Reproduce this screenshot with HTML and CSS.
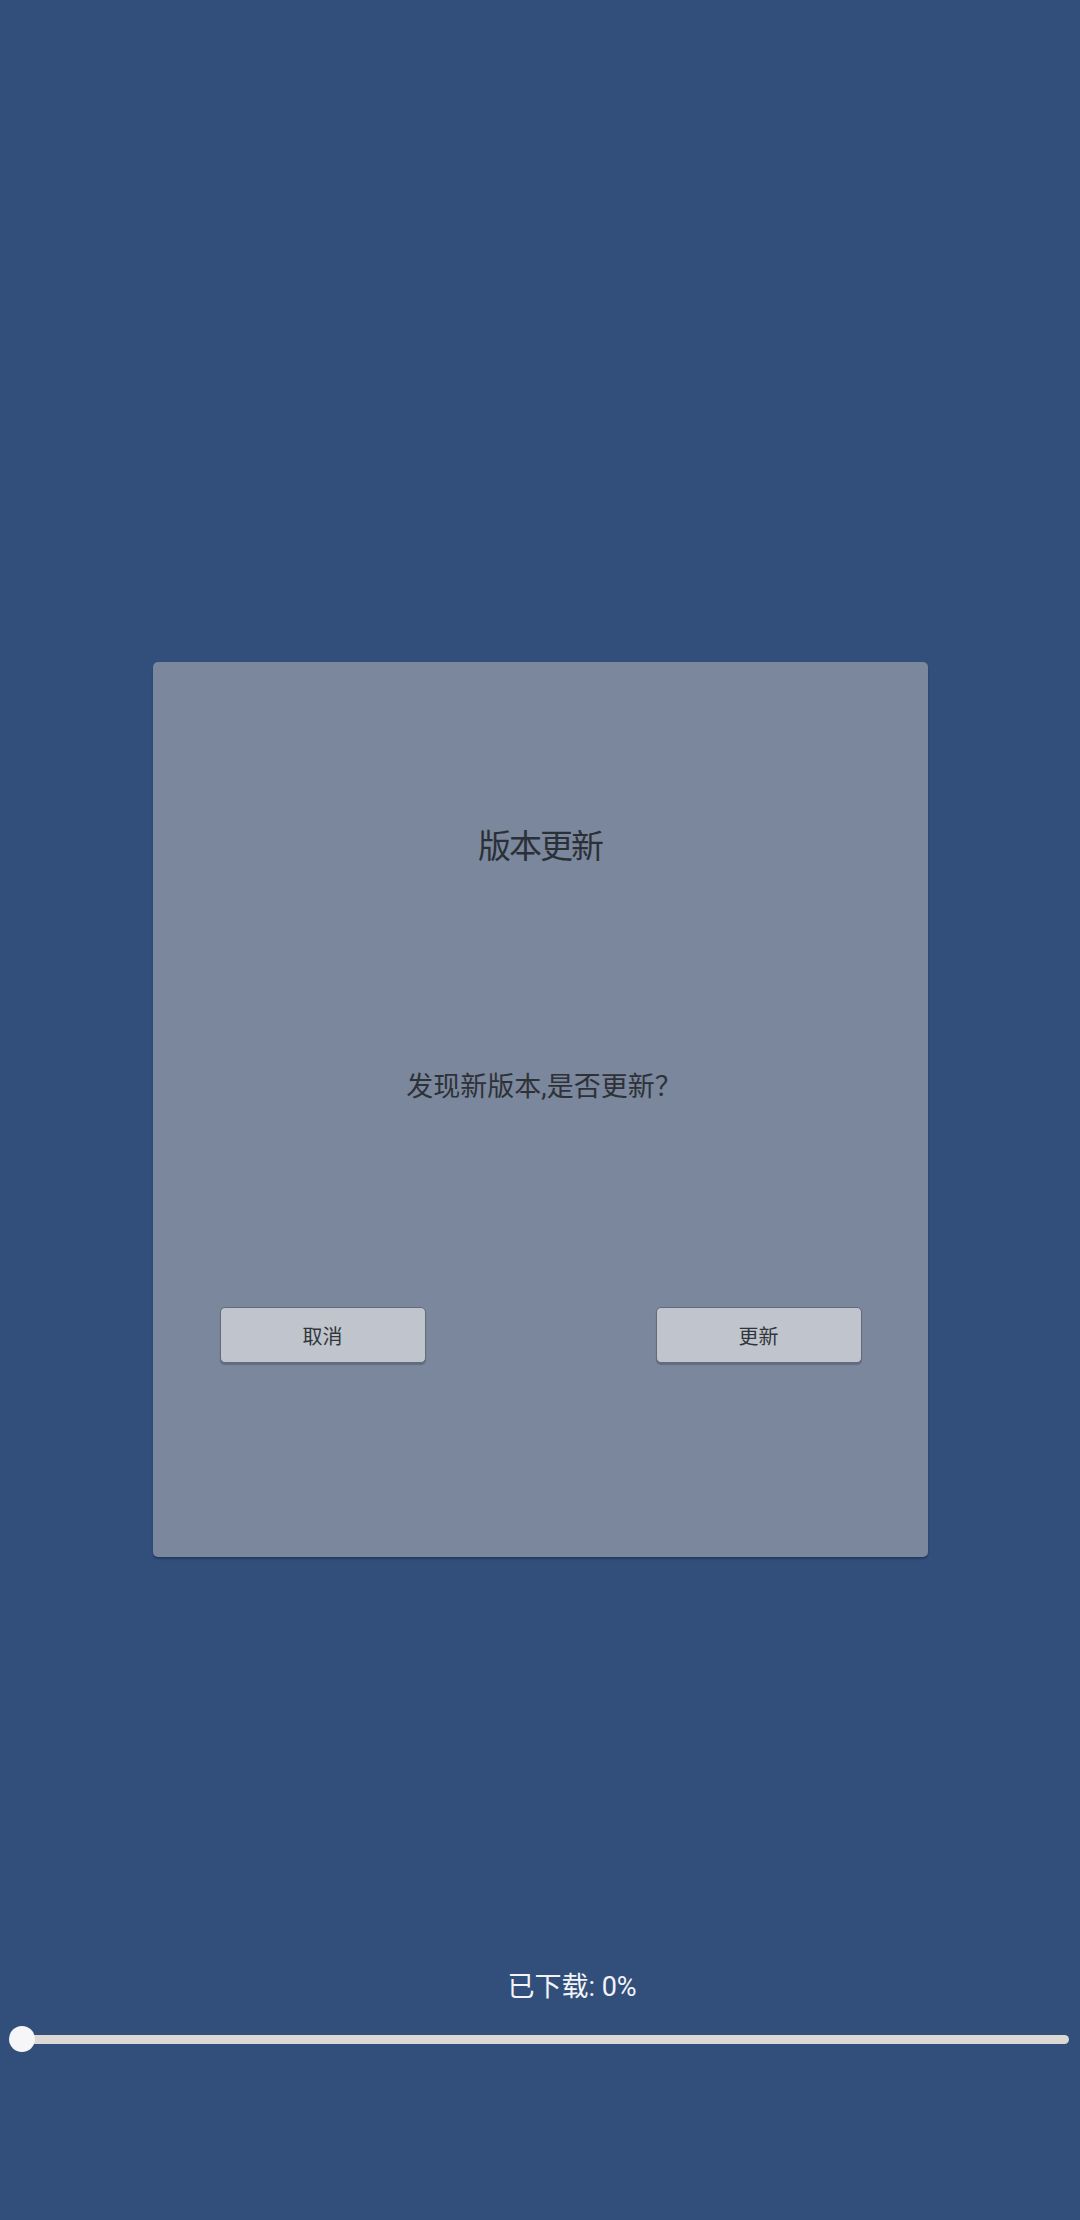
FILE: index.html
```html
<!DOCTYPE html>
<html lang="zh-CN">
<head>
<meta charset="utf-8">
<title>版本更新</title>
<link rel="stylesheet" href="styles.css">
</head>
<body>
<div class="screen">
  <div class="dialog">
    <div class="title">版本更新</div>
    <div class="message">发现新版本,是否更新？</div>
    <div class="actions">
      <div class="btn">取消</div>
      <div class="btn">更新</div>
    </div>
  </div>
  <div class="progress-label">已下载: 0%</div>
  <div class="slider">
    <div class="track"></div>
    <div class="handle"></div>
  </div>
</div>
</body>
</html>
```
FILE: styles.css
```css
html, body {
  margin: 0;
  padding: 0;
  background: #324f7c;
}
.screen {
  width: 1080px;
  height: 2220px;
  box-sizing: border-box;
  padding-top: 662px;
  display: flex;
  flex-direction: column;
  font-family: Roboto, "Noto Sans CJK SC", sans-serif;
}
.dialog {
  align-self: center;
  width: 775px;
  height: 895px;
  box-sizing: border-box;
  background: #7b879c;
  border-radius: 5px;
  box-shadow: 0 2px 2px rgba(20, 35, 60, 0.45);
  display: flex;
  flex-direction: column;
  align-items: center;
  padding-top: 165px;
}
.title {
  font-size: 33px;
  line-height: 40px;
  height: 40px;
  letter-spacing: -2px;
  color: #2b3037;
}
.message {
  margin-top: 200px;
  padding-left: 8px;
  font-size: 27px;
  line-height: 40px;
  height: 40px;
  letter-spacing: 0;
  color: #2e3238;
}
.actions {
  margin-top: 200px;
  align-self: stretch;
  display: flex;
  justify-content: space-between;
  padding: 0 66px 0 67px;
}
.btn {
  width: 206px;
  height: 56px;
  box-sizing: border-box;
  background: #c0c5cd;
  border: 1.5px solid #626b7c;
  border-radius: 5px;
  box-shadow: 0 2px 1px rgba(70, 80, 100, 0.5);
  display: flex;
  align-items: center;
  justify-content: center;
  font-size: 20px;
  color: #32363c;
}
.progress-label {
  margin-top: 412px;
  padding-left: 64px;
  text-align: center;
  font-size: 27px;
  line-height: 36px;
  height: 36px;
  color: #f2f4f8;
}
.slider {
  margin: 21px 11px 0 9px;
  height: 26px;
  position: relative;
  display: flex;
  align-items: center;
}
.track {
  flex: 1;
  height: 9px;
  margin-left: 10px;
  background: #dcd8d4;
  border-radius: 5px;
}
.handle {
  position: absolute;
  left: 0;
  top: 0;
  width: 26px;
  height: 26px;
  border-radius: 50%;
  background: #f6f6f8;
}
```
